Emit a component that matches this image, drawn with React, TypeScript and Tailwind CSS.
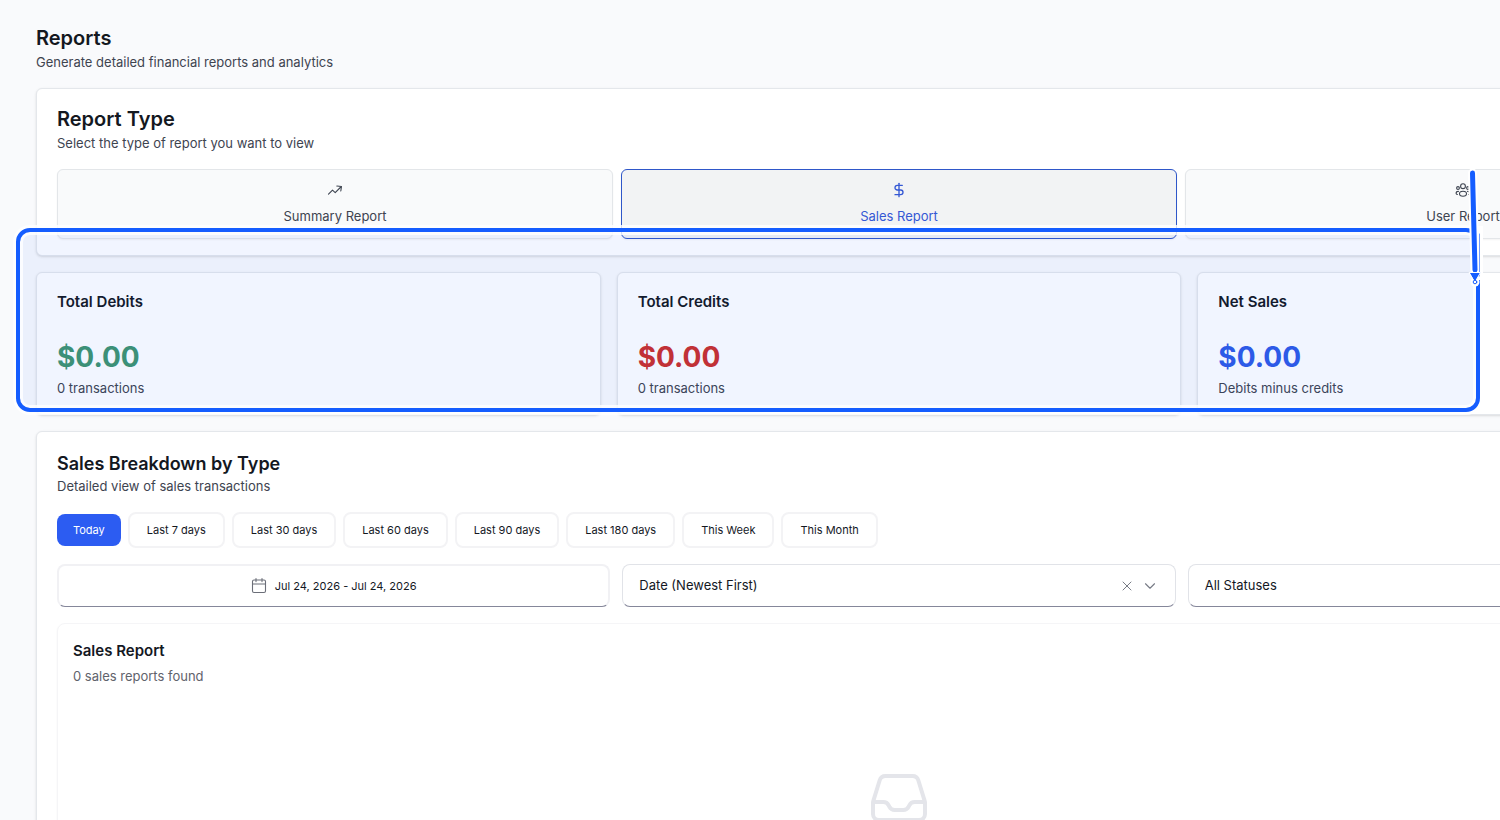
import type { ReactNode } from "react";
import clsx from "clsx";
import { HiOutlineInbox } from "react-icons/hi2";
import { ChevronDown, DollarSign, X } from "lucide-react";

const TrendIcon = () => (
  <svg
    className="size-4"
    viewBox="0 0 16 16"
    fill="none"
    stroke="currentColor"
    strokeWidth="1.1"
    strokeLinecap="round"
    strokeLinejoin="round"
  >
    <path d="M1.5 12.2 5.5 8.2l2.7 2.4L13.8 5M9.8 4l4.7.5-.7 4.5" />
  </svg>
);

const UsersIcon = () => (
  <svg
    className="size-4"
    viewBox="0 0 16 16"
    fill="none"
    stroke="currentColor"
    strokeWidth="1.1"
    strokeLinecap="round"
    strokeLinejoin="round"
  >
    <circle cx="8" cy="4.2" r="2.4" />
    <circle cx="3" cy="6" r="1.4" />
    <circle cx="13" cy="6" r="1.4" />
    <ellipse cx="8" cy="11.7" rx="3.5" ry="2.5" />
    <path d="M3.4 9.4C2 9.4 1.1 10.3 1.1 11.3c0 .8.5 1.2 1.3 1.2M12.6 9.4c1.4 0 2.3.9 2.3 1.9 0 .8-.5 1.2-1.3 1.2" />
  </svg>
);

const CalendarIcon = () => (
  <svg
    className="size-4 text-[#6b6e78]"
    viewBox="0 0 16 16"
    fill="none"
    stroke="currentColor"
    strokeWidth="1.1"
    strokeLinecap="round"
  >
    <rect x="1.5" y="2" width="13" height="12.5" rx="1.5" />
    <path d="M1.5 6h13M5 .6v3M11 .6v3" />
  </svg>
);

const reportTypes = [
  { label: "Summary Report", icon: <TrendIcon />, active: false },
  {
    label: "Sales Report",
    icon: <DollarSign className="size-4" strokeWidth={2} />,
    active: true,
  },
  { label: "User Report", icon: <UsersIcon />, active: false },
];

const stats = [
  {
    title: "Total Debits",
    value: "$0.00",
    note: "0 transactions",
    color: "text-[#3f9470]",
  },
  {
    title: "Total Credits",
    value: "$0.00",
    note: "0 transactions",
    color: "text-[#cc2f2b]",
  },
  {
    title: "Net Sales",
    value: "$0.00",
    note: "Debits minus credits",
    color: "text-[#2f5be6]",
  },
];

const ranges = [
  "Last 7 days",
  "Last 30 days",
  "Last 60 days",
  "Last 90 days",
  "Last 180 days",
  "This Week",
  "This Month",
];

const Card = ({
  children,
  className,
}: {
  children: ReactNode;
  className?: string;
}) => (
  <section
    className={clsx(
      "rounded-md border border-[#e4e7eb] bg-white px-5 shadow-sm",
      className
    )}
  >
    {children}
  </section>
);

const FilterSelect = ({
  label,
  options,
}: {
  label: string;
  options: string[];
}) => (
  <div className="flex h-[43px] items-center rounded-lg border border-[#e1e3e8] border-b-[#85879a] bg-white px-4">
    <select
      aria-label={label}
      className="min-w-0 flex-1 appearance-none bg-transparent text-[13px] text-[#14181f] outline-none"
    >
      {options.map((option) => (
        <option key={option}>{option}</option>
      ))}
    </select>
    <button type="button" aria-label={`Clear ${label}`} className="mr-1.5">
      <X className="size-4 text-[#777b85]" strokeWidth={1.5} />
    </button>
    <ChevronDown className="size-[18px] text-[#777b85]" strokeWidth={1.5} />
  </div>
);

// Marker box and arrow drawn over the summary cards
const Annotation = () => (
  <div className="pointer-events-none absolute top-[228px] right-5 left-4 h-[184px]">
    <div className="h-full rounded-[14px] border-4 border-[#155dff] bg-[#155dff]/6 shadow-[0_0_0_3px_#ffffffcc,inset_0_0_0_3px_#ffffffcc]" />
    <svg
      className="absolute -top-16 -right-2 h-[124px] w-5"
      viewBox="0 0 20 124"
      fill="none"
      strokeLinecap="round"
    >
      <path d="M4.5 9 7 108" stroke="#fff" strokeWidth="9" />
      <path d="M3 62h12v54H5z" fill="#fff" />
      <path d="M11.5 70v42" stroke="#6f9bff" strokeWidth="1" />
      <path d="M4.5 9 7 106" stroke="#155dff" strokeWidth="5" />
      <circle cx="7" cy="118" r="4.5" fill="#fff" />
      <path d="M1.5 108.5h11L7 118z" fill="#155dff" stroke="#fff" />
      <circle cx="7" cy="118" r="1.8" fill="#fff" stroke="#155dff" />
    </svg>
  </div>
);

const App = () => {
  return (
    <div className="relative h-screen overflow-hidden bg-[#f9fafc] font-['Inter',sans-serif] text-[#14181f]">
      <main className="w-[120%] pt-7 pr-[38px] pl-9">
        <header>
          <h1 className="text-xl leading-5 font-semibold">Reports</h1>
          <p className="mt-1 text-[13px] leading-5 text-[#3e4450]">
            Generate detailed financial reports and analytics
          </p>
        </header>

        <Card className="mt-4 pt-5 pb-4">
          <h2 className="text-xl leading-5 font-semibold">Report Type</h2>
          <p className="mt-1 text-[13px] leading-5 text-[#3e4450]">
            Select the type of report you want to view
          </p>
          <div className="mt-4 grid grid-cols-3 gap-2">
            {reportTypes.map(({ label, icon, active }) => (
              <button
                key={label}
                type="button"
                className={clsx(
                  "flex h-[70px] flex-col items-center gap-2 rounded-md border pt-3 text-[13px] leading-5 shadow-xs",
                  active
                    ? "border-[#2f57c9] bg-[#f2f3f4] text-[#3558d4]"
                    : "border-[#e3e6e9] bg-[#f9fafb] text-[#3e4450]"
                )}
              >
                {icon}
                {label}
              </button>
            ))}
          </div>
        </Card>

        <div className="mt-4 grid grid-cols-3 gap-4">
          {stats.map(({ title, value, note, color }) => (
            <Card key={title} className="pt-5 pb-4">
              <h3 className="text-[15px] leading-[18px] font-semibold">
                {title}
              </h3>
              <p
                className={clsx("mt-7 text-[28px] leading-9 font-bold", color)}
              >
                {value}
              </p>
              <p className="mt-[3px] text-[13px] leading-5 text-[#3e4450]">
                {note}
              </p>
            </Card>
          ))}
        </div>

        <Card className="mt-4 pt-5 pb-5">
          <h2 className="text-lg leading-6 font-semibold">
            Sales Breakdown by Type
          </h2>
          <p className="text-[13px] leading-5 text-[#3e4450]">
            Detailed view of sales transactions
          </p>

          <div className="mt-4 flex items-center gap-[7px]">
            <button
              type="button"
              className="h-8 rounded-lg bg-[#2c5cf2] px-4 text-[11px] text-white"
            >
              Today
            </button>
            {ranges.map((range) => (
              <button
                key={range}
                type="button"
                className="h-9 rounded-lg border-2 border-[#f3f3f5] bg-white px-[17px] text-[11px]"
              >
                {range}
              </button>
            ))}
          </div>

          <div className="mt-4 grid grid-cols-3 gap-3">
            <button
              type="button"
              className="flex h-[43px] items-center justify-center gap-2 rounded-lg border-2 border-b border-[#f1f1f4] border-b-[#85879a] bg-white text-[11px]"
            >
              <CalendarIcon />
              Jul 24, 2026 - Jul 24, 2026
            </button>
            <FilterSelect
              label="Sort by"
              options={["Date (Newest First)", "Date (Oldest First)"]}
            />
            <FilterSelect
              label="Status"
              options={["All Statuses", "Completed", "Pending"]}
            />
          </div>

          <div className="mt-4 rounded-lg border border-[#f5f5f7] p-[15px] shadow-xs">
            <h3 className="text-[15px] leading-6 font-semibold">
              Sales Report
            </h3>
            <p className="mt-[3px] text-[13px] leading-5 text-[#5f636c]">
              0 sales reports found
            </p>
            <div className="flex justify-center py-20">
              <HiOutlineInbox className="size-16 text-[#e4e5ea]" />
            </div>
          </div>
        </Card>
      </main>
      <Annotation />
    </div>
  );
};

export default App;
